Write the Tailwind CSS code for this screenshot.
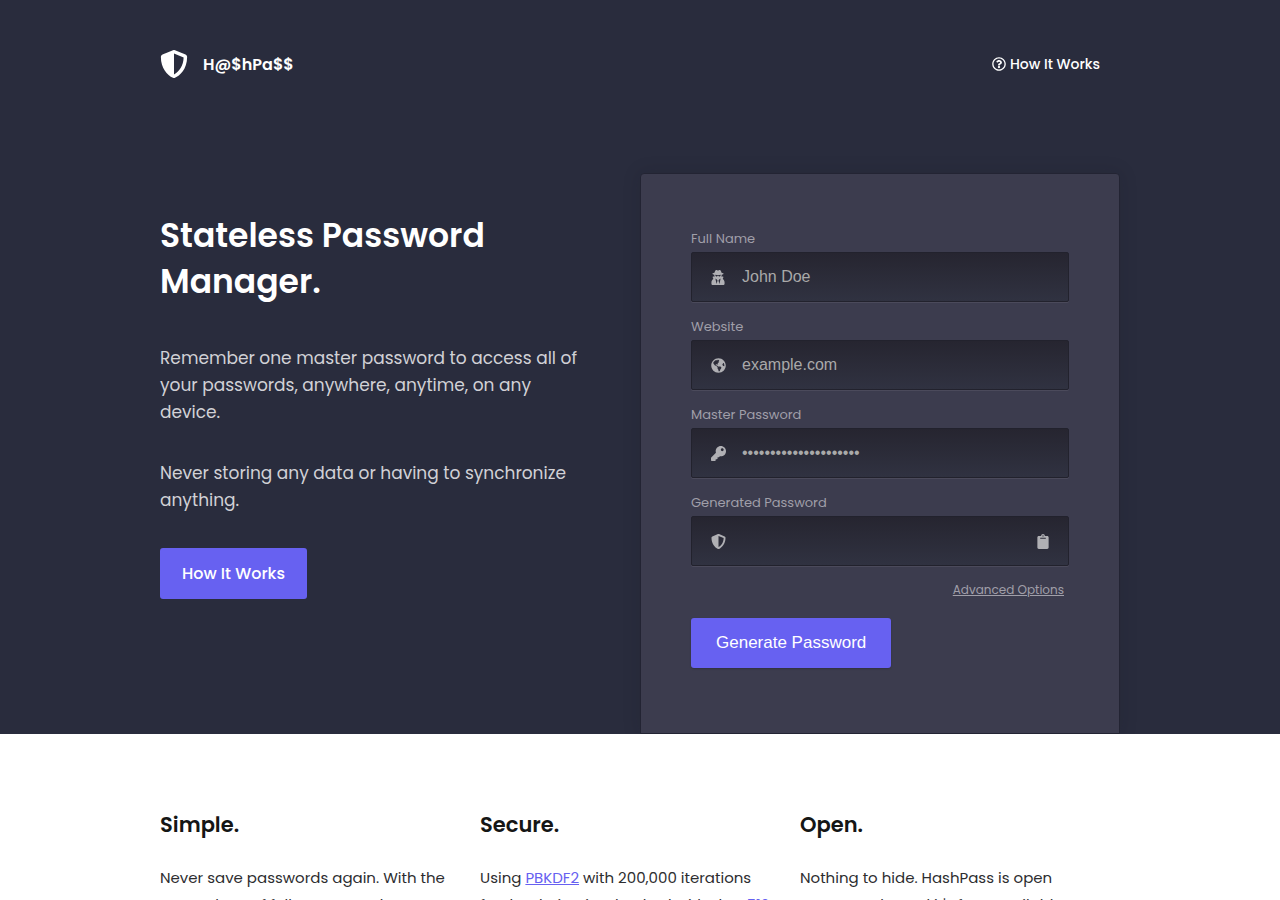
<!DOCTYPE html>
<html lang="en">
<head>
<meta charset="utf-8">
<meta name="viewport" content="width=device-width, initial-scale=1">
<title>H@$hPa$$</title>
<script src="https://cdn.jsdelivr.net/npm/@tailwindcss/browser@4"></script>
</head>
<body class="bg-white font-[Poppins,Inter,sans-serif] text-[#151616]">
<svg class="hidden" aria-hidden="true">
  <symbol id="shield" viewBox="0 0 512 512"><path d="M466.5 83.7l-192-80a48.15 48.15 0 0 0-36.9 0l-192 80C27.7 91.1 16 108.6 16 128c0 198.5 114.5 335.7 221.5 380.3 11.8 4.9 25.1 4.9 36.9 0C360.1 472.6 496 349.3 496 128c0-19.4-11.7-36.9-29.5-44.3zM256.1 446.3l-.1-381 175.9 73.3c-3.3 151.4-82.1 261.1-175.8 307.7z"/></symbol>
  <symbol id="question" viewBox="0 0 512 512"><path d="M256 8C119.043 8 8 119.083 8 256c0 136.997 111.043 248 248 248s248-111.003 248-248C504 119.083 392.957 8 256 8zm0 448c-110.532 0-200-89.431-200-200 0-110.495 89.472-200 200-200 110.491 0 200 89.471 200 200 0 110.53-89.431 200-200 200zm107.244-255.2c0 67.052-72.421 68.084-72.421 92.863V300c0 6.627-5.373 12-12 12h-45.647c-6.627 0-12-5.373-12-12v-8.659c0-35.745 27.1-50.034 47.579-61.516 17.561-9.845 28.324-16.541 28.324-29.579 0-17.246-21.999-28.693-39.784-28.693-23.189 0-33.894 10.977-48.942 29.969-4.057 5.12-11.46 6.071-16.666 2.124l-27.824-21.098c-5.107-3.872-6.251-11.066-2.644-16.363C184.846 131.491 214.94 112 261.794 112c49.071 0 101.45 38.304 101.45 88.8zM298 368c0 23.159-18.841 42-42 42s-42-18.841-42-42 18.841-42 42-42 42 18.841 42 42z"/></symbol>
  <symbol id="secret" viewBox="0 0 448 512"><path d="M383.9 308.3l23.9-62.6c4-10.5-3.7-21.7-15-21.7h-58.5c11-18.9 17.8-40.6 17.8-64v-.3c39.2-7.8 64-19.1 64-31.7 0-13.3-27.3-25.1-70.1-33-9.2-32.8-27-65.8-40.6-82.8-9.5-11.9-25.9-15.6-39.5-8.8l-27.6 13.8c-9 4.5-19.6 4.5-28.6 0L182.1 3.4c-13.6-6.8-30-3.1-39.5 8.8-13.5 17-31.4 50-40.6 82.8-42.7 7.9-70 19.7-70 33 0 12.6 24.8 23.9 64 31.7v.3c0 23.4 6.8 45.1 17.8 64H56.3c-11.5 0-19.2 11.7-14.7 22.3l25.8 60.2C27.3 329.8 0 372.7 0 422.4v44.8C0 491.9 20.1 512 44.8 512h358.4c24.7 0 44.8-20.1 44.8-44.8v-44.8c0-48.4-25.8-90.4-64.1-114.1zM176 480l-41.6-192 49.6 32 24 40-32 120zm96 0l-32-120 24-40 49.6-32L272 480zm41.7-298.5c-3.9 11.9-7 24.6-16.5 33.4-10.1 9.3-48 22.4-64-25-2.8-8.4-15.4-8.4-18.3 0-17 50.2-56 32.4-64 25-9.5-8.8-12.7-21.5-16.5-33.4-.8-2.5-6.3-5.7-6.3-5.8v-10.8c28.3 3.6 61 5.8 96 5.8s67.7-2.1 96-5.8v10.8c-.1.1-5.6 3.2-6.4 5.8z"/></symbol>
  <symbol id="globe" viewBox="0 0 496 512"><path d="M248 8C111.03 8 0 119.03 0 256s111.03 248 248 248 248-111.03 248-248S384.97 8 248 8zm82.29 357.6c-3.9 3.88-7.99 7.95-11.31 11.28-2.99 3-5.1 6.7-6.17 10.71-1.51 5.66-2.73 11.38-4.77 16.87l-17.39 46.85c-13.76 3-28 4.69-42.65 4.69v-27.38c1.69-12.62-7.64-36.26-22.63-51.25-6-6-9.37-14.14-9.37-22.63v-32.01c0-11.64-6.27-22.34-16.46-27.97-14.37-7.95-34.81-19.06-48.81-26.11-11.48-5.78-22.1-13.14-31.65-21.75l-.8-.72a114.792 114.792 0 0 1-18.06-20.74c-9.38-13.77-24.66-36.42-34.59-51.14 20.47-45.5 57.36-82.04 103.2-101.89l24.01 12.01C203.48 89.74 216 82.01 216 70.11v-11.3c7.99-1.29 16.12-2.11 24.39-2.42l28.3 28.3c6.25 6.25 6.25 16.38 0 22.63L264 112l-10.34 10.34c-3.12 3.12-3.12 8.19 0 11.31l4.69 4.69c3.12 3.12 3.12 8.19 0 11.31l-8 8a8.008 8.008 0 0 1-5.66 2.34h-8.99c-2.08 0-4.08.81-5.58 2.27l-9.92 9.65a8.008 8.008 0 0 0-1.58 9.31l15.59 31.19c2.66 5.32-1.21 11.58-7.15 11.58h-5.64c-1.93 0-3.79-.7-5.24-1.96l-9.28-8.06a16.017 16.017 0 0 0-15.55-3.1l-31.17 10.39a11.95 11.95 0 0 0-8.17 11.34c0 4.53 2.56 8.66 6.61 10.69l11.08 5.54c9.41 4.71 19.79 7.16 30.31 7.16s22.59 27.29 32 32h66.75c8.49 0 16.62 3.37 22.63 9.37l13.69 13.69a30.503 30.503 0 0 1 8.93 21.57 46.536 46.536 0 0 1-13.72 32.98zM417 274.25c-5.79-1.45-10.84-5-14.15-9.97l-17.98-26.97a23.97 23.97 0 0 1 0-26.62l19.59-29.38c2.32-3.47 5.5-6.29 9.24-8.15l12.98-6.49C440.2 193.59 448 223.87 448 256c0 8.67-.74 17.16-1.82 25.54L417 274.25z"/></symbol>
  <symbol id="key" viewBox="0 0 512 512"><path d="M512 176.001C512 273.203 433.202 352 336 352c-11.22 0-22.19-1.062-32.827-3.069l-24.012 27.014A23.999 23.999 0 0 1 261.223 384H224v40c0 13.255-10.745 24-24 24h-40v40c0 13.255-10.745 24-24 24H24c-13.255 0-24-10.745-24-24v-78.059c0-6.365 2.529-12.47 7.029-16.971l161.802-161.802C163.108 213.814 160 195.271 160 176 160 78.798 238.797.001 335.999 0 433.488-.001 512 78.511 512 176.001zM336 128c0 26.51 21.49 48 48 48s48-21.49 48-48-21.49-48-48-48-48 21.49-48 48z"/></symbol>
  <symbol id="clipboard" viewBox="0 0 384 512"><path d="M384 112v352c0 26.51-21.49 48-48 48H48c-26.51 0-48-21.49-48-48V112c0-26.51 21.49-48 48-48h80c0-35.29 28.71-64 64-64s64 28.71 64 64h80c26.51 0 48 21.49 48 48zM192 40c-13.255 0-24 10.745-24 24s10.745 24 24 24 24-10.745 24-24-10.745-24-24-24m96 114v-20a6 6 0 0 0-6-6H102a6 6 0 0 0-6 6v20a6 6 0 0 0 6 6h180a6 6 0 0 0 6-6z"/></symbol>
</svg>

<div class="overflow-hidden bg-[#292c3d]">
  <div class="mx-auto max-w-[960px]">
    <header class="flex h-32 items-center justify-between pr-5">
      <a href="#" class="flex items-center gap-[15px] text-base leading-[26px] font-semibold text-white"><svg class="size-7 fill-current"><use href="#shield"/></svg><span class="pt-px">H@$hPa$$</span></a>
      <a href="#how" class="flex items-center gap-1 text-sm font-medium text-white"><svg class="size-[14px] fill-current"><use href="#question"/></svg>How It Works</a>
    </header>

    <main class="grid grid-cols-1 pt-[45px] md:grid-cols-2">
      <section class="pt-10 pr-12">
        <h1 class="text-[33px] leading-[46px] font-semibold text-white">Stateless Password Manager.</h1>
        <p class="mt-10 text-[17px] leading-[27px] text-[#d1d1d6]">Remember one master password to access all of your passwords, anywhere, anytime, on any device.</p>
        <p class="mt-[34px] text-[17px] leading-[27px] text-[#d1d1d6]">Never storing any data or having to synchronize anything.</p>
        <a href="#how" class="mt-[34px] inline-flex h-[51px] items-center rounded-[3px] bg-[#6761f1] px-[22px] text-base font-medium text-white">How It Works</a>
      </section>

      <form class="rounded-t border border-[#232433] bg-[#3c3c4e] px-[50px] pt-[53px] pb-[65px] shadow-[0_0_18px_rgba(20,20,30,0.15)]">
        <label for="name" class="mb-px block text-[13px] leading-6 text-[#a09fa9]">Full Name</label>
        <div class="flex h-[50px] items-center rounded-[2px] border border-[#22222d] bg-linear-to-b from-[#262530] to-[#303241] px-[19px] shadow-[0_1px_0_#4b4a5b]">
          <svg class="h-[15px] w-[14px] fill-[#b0b0b4]"><use href="#secret"/></svg>
          <input id="name" type="text" placeholder="John Doe" class="ml-[17px] min-w-0 flex-1 bg-transparent font-['Liberation_Sans',sans-serif] text-base text-[#a9a9a9] outline-none placeholder:text-[#a9a9a9]">
        </div>
        <label for="site" class="mt-[13px] mb-px block text-[13px] leading-6 text-[#a09fa9]">Website</label>
        <div class="flex h-[50px] items-center rounded-[2px] border border-[#22222d] bg-linear-to-b from-[#262530] to-[#303241] px-[19px] shadow-[0_1px_0_#4b4a5b]">
          <svg class="h-[15px] w-[15px] fill-[#b0b0b4]"><use href="#globe"/></svg>
          <input id="site" type="text" placeholder="example.com" class="ml-4 min-w-0 flex-1 bg-transparent font-['Liberation_Sans',sans-serif] text-base text-[#a9a9a9] outline-none placeholder:text-[#a9a9a9]">
        </div>
        <label for="master" class="mt-[13px] mb-px block text-[13px] leading-6 text-[#a09fa9]">Master Password</label>
        <div class="flex h-[50px] items-center rounded-[2px] border border-[#22222d] bg-linear-to-b from-[#262530] to-[#303241] px-[19px] shadow-[0_1px_0_#4b4a5b]">
          <svg class="h-[15px] w-[15px] fill-[#b0b0b4]"><use href="#key"/></svg>
          <input id="master" type="password" placeholder="•••••••••••••••••••••" class="ml-4 min-w-0 flex-1 bg-transparent font-['Liberation_Sans',sans-serif] text-base text-[#a9a9a9] outline-none placeholder:text-[#a9a9a9]">
        </div>
        <label for="generated" class="mt-[13px] mb-px block text-[13px] leading-6 text-[#a09fa9]">Generated Password</label>
        <div class="flex h-[50px] items-center rounded-[2px] border border-[#22222d] bg-linear-to-b from-[#262530] to-[#303241] px-[19px] shadow-[0_1px_0_#4b4a5b]">
          <svg class="h-[15px] w-[15px] fill-[#b0b0b4]"><use href="#shield"/></svg>
          <input id="generated" type="text" readonly class="ml-4 min-w-0 flex-1 bg-transparent font-['Liberation_Sans',sans-serif] text-base text-[#a9a9a9] outline-none">
          <button type="button" aria-label="Copy password"><svg class="h-[15px] w-3 fill-[#b0b0b4]"><use href="#clipboard"/></svg></button>
        </div>
        <div class="mt-[14px] pr-[5px] text-right text-xs leading-5"><a href="#advanced" class="text-[#a09fa9] underline">Advanced Options</a></div>
        <button type="button" class="mt-[18px] block h-[50px] rounded-[3px] bg-[#6761f1] px-[25px] font-['Liberation_Sans',sans-serif] text-[17px] text-white shadow-[0_1px_2px_rgba(0,0,0,0.2)]">Generate Password</button>
      </form>
    </main>
  </div>
</div>

<section id="how" class="mx-auto grid max-w-[960px] grid-cols-1 pt-[74px] md:grid-cols-3">
  <article class="pr-6">
    <h2 class="text-[21px] leading-[34px] font-semibold">Simple.</h2>
    <p class="mt-[22px] text-[15px] leading-[27px] text-[#2d2d2f]">Never save passwords again. With the<br>every place of fully generated</p>
  </article>
  <article class="pr-6">
    <h2 class="text-[21px] leading-[34px] font-semibold">Secure.</h2>
    <p class="mt-[22px] text-[15px] leading-[27px] text-[#2d2d2f]">Using <a href="#pbkdf2" class="text-[#6761f1] underline">PBKDF2</a> with 200,000 iterations<br>for the derivation, hashed with sha-<a href="#sha" class="text-[#6761f1] underline">512</a></p>
  </article>
  <article class="pr-6">
    <h2 class="text-[21px] leading-[34px] font-semibold">Open.</h2>
    <p class="mt-[22px] text-[15px] leading-[27px] text-[#2d2d2f]">Nothing to hide. HashPass is open<br>source code, and it's free, available</p>
  </article>
</section>
</body>
</html>
